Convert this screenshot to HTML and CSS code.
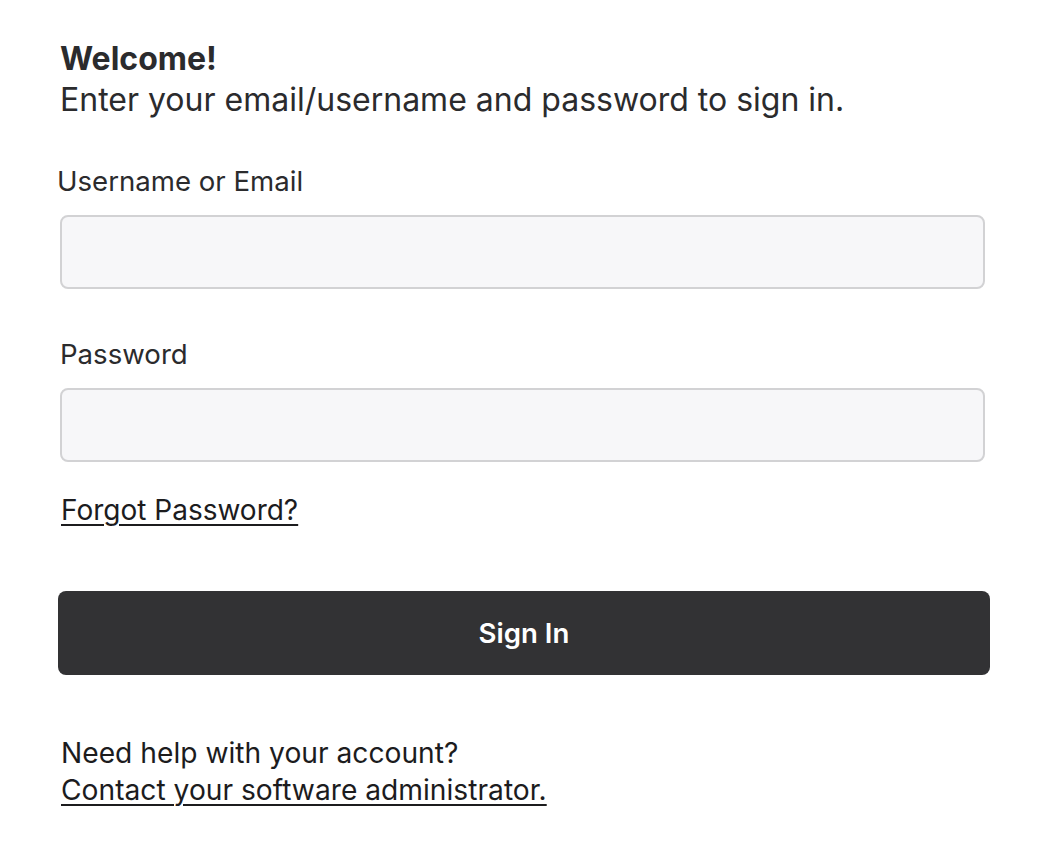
FILE: index.html
```html
<!DOCTYPE html>
<html lang="en">
<head>
<meta charset="utf-8">
<title>Sign in</title>
<link rel="stylesheet" href="styles.css">
</head>
<body>
<main class="login">
  <header class="intro">
    <h1 class="intro-title">Welcome!</h1>
    <p class="intro-text">Enter your email/username and password to sign in.</p>
  </header>
  <form class="form">
    <div class="field">
      <label class="field-label field-label-first" for="user">Username or Email</label>
      <input class="field-input" id="user" type="text">
    </div>
    <div class="field field-pass">
      <label class="field-label" for="pass">Password</label>
      <input class="field-input" id="pass" type="password">
    </div>
    <a class="link forgot" href="#">Forgot Password?</a>
    <button class="btn" type="button">Sign In</button>
  </form>
  <footer class="help">
    <p class="help-text">Need help with your account?</p>
    <a class="link" href="#">Contact your software administrator.</a>
  </footer>
</main>
</body>
</html>
```
FILE: styles.css
```css
* { box-sizing: border-box; }
html, body { margin: 0; padding: 0; background: #ffffff; }
body {
  font-family: "Inter", "Noto Sans", "Liberation Sans", sans-serif;
  color: #2b2b2d;
}
.login {
  width: 1060px;
  padding: 38px 70px 0 58px;
  display: flex;
  flex-direction: column;
}
.intro { padding-left: 2px; }
.intro-title {
  margin: 0;
  font-size: 32px;
  font-weight: 700;
  line-height: 41px;
}
.intro-text {
  margin: 0;
  font-size: 32px;
  font-weight: 400;
  line-height: 41px;
}
.form {
  display: flex;
  flex-direction: column;
  margin-top: 44px;
}
.field { display: flex; flex-direction: column; padding: 0 5px 0 2px; }
.field-label {
  font-size: 27.6px;
  line-height: 34px;
  margin-bottom: 17px;
}
.field-label-first { margin-left: -3px; }
.field-input {
  height: 74px;
  border: 2px solid #d2d2d4;
  border-radius: 8px;
  background: #f7f7f9;
  font: inherit;
}
.field-pass { margin-top: 48px; }
.link {
  color: #1c1c1e;
  font-size: 28px;
  text-decoration: underline;
  text-underline-offset: 4px;
  text-decoration-thickness: 2px;
  align-self: flex-start;
}
.forgot { margin: 31px 0 0 3px; line-height: 34px; }
.btn {
  margin-top: 64px;
  height: 84px;
  border: none;
  border-radius: 8px;
  background: #323234;
  color: #ffffff;
  font: inherit;
  font-size: 27.6px;
  font-weight: 600;
}
.help {
  margin-top: 60px;
  padding-left: 3px;
  display: flex;
  flex-direction: column;
  line-height: 37px;
}
.help-text {
  margin: 0;
  font-size: 28.2px;
  color: #1c1c1e;
}
.help .link { line-height: 37px; font-size: 28.2px; }
```
